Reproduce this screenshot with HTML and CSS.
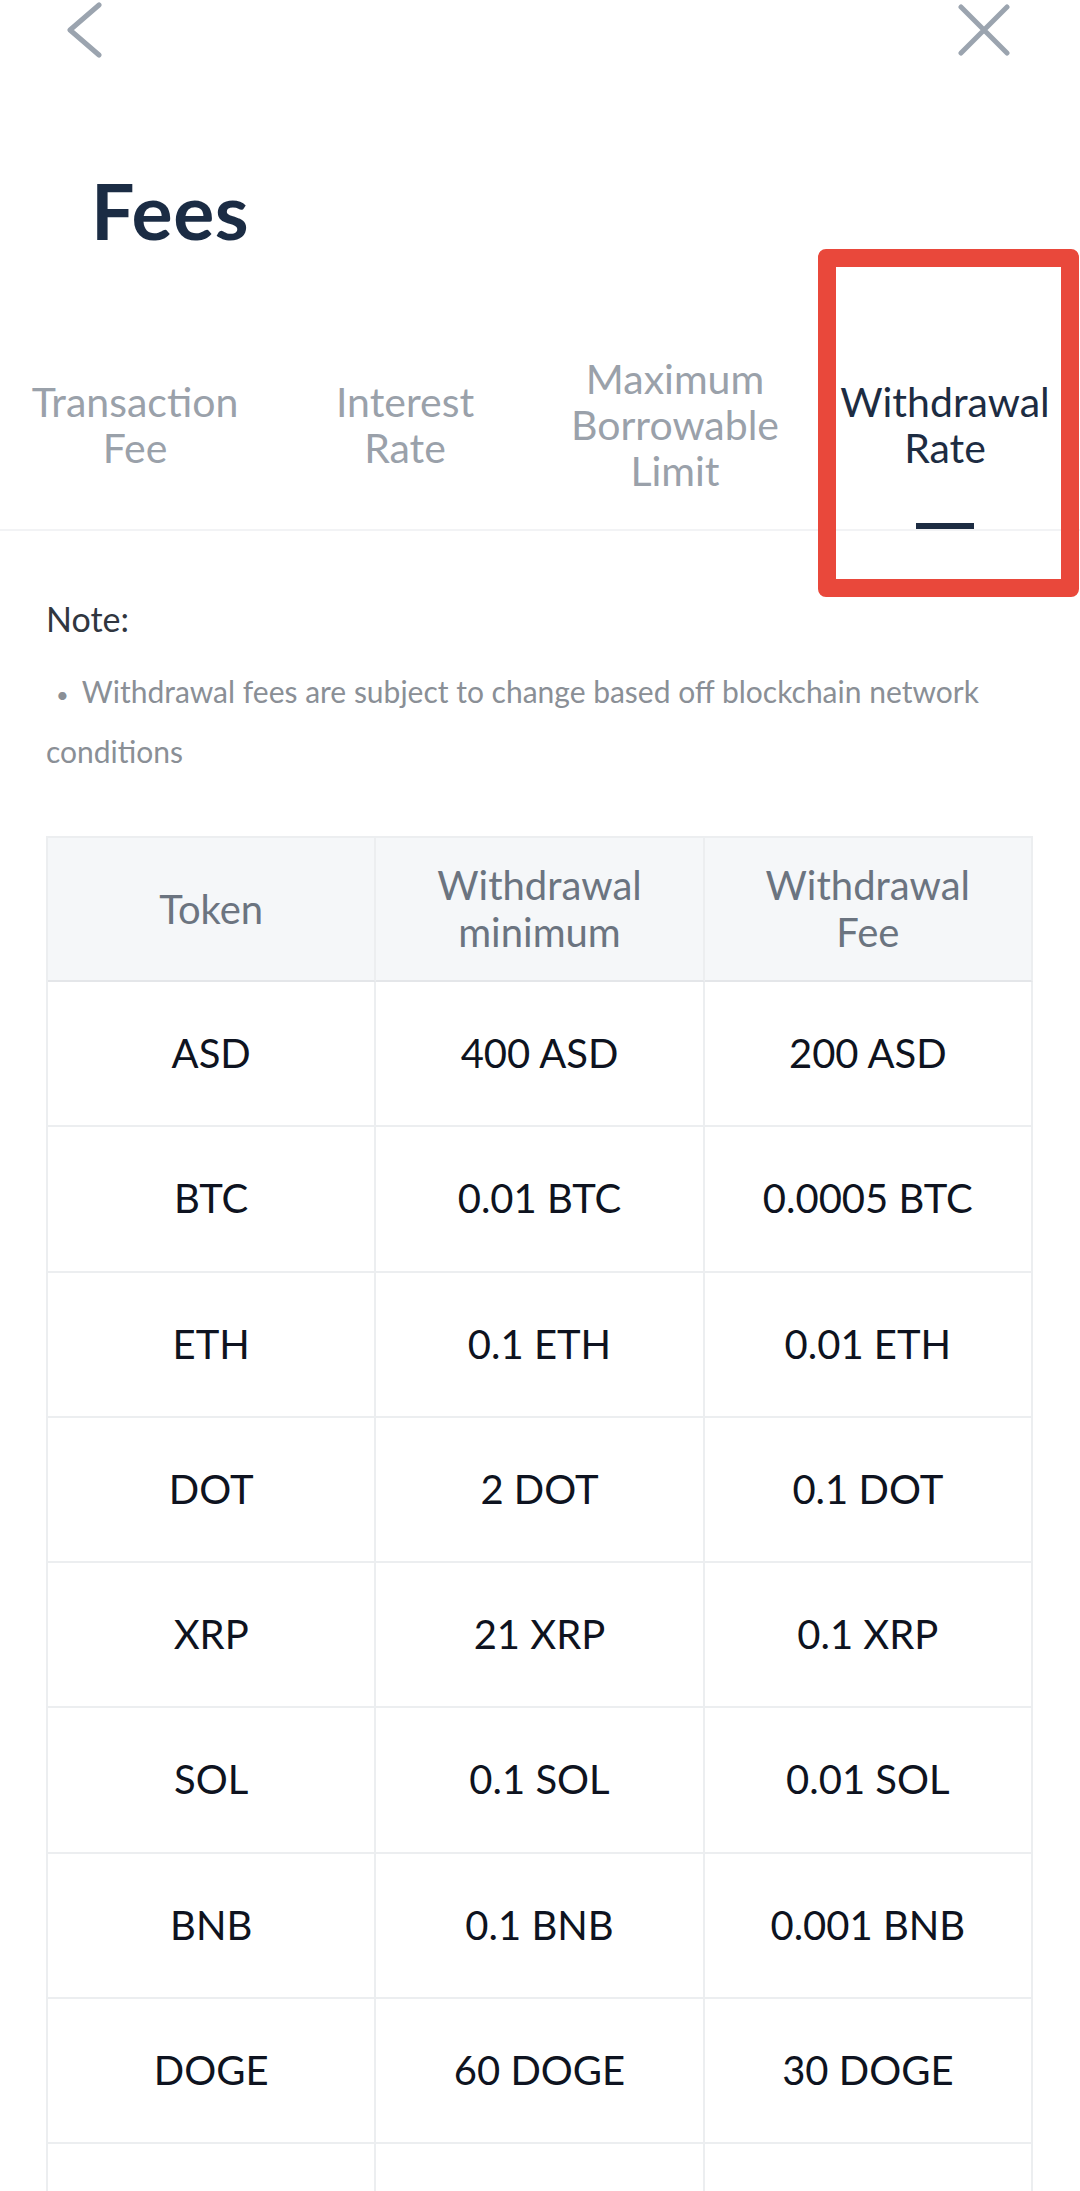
FILE: index.html
```html
<!DOCTYPE html>
<html lang="en">
<head>
<meta charset="utf-8">
<title>Fees</title>
<link rel="stylesheet" href="styles.css">
</head>
<body>
<div class="page">
  <header class="topbar">
    <svg class="icon-back" width="36" height="60" viewBox="0 0 36 60" aria-label="Back">
      <path d="M32 3 L3 28 L32 53" fill="none" stroke="#9ba4af" stroke-width="5" stroke-linecap="round" stroke-linejoin="round"/>
    </svg>
    <svg class="icon-close" width="52" height="52" viewBox="0 0 52 52" aria-label="Close">
      <path d="M3 3 L49 49 M49 3 L3 49" fill="none" stroke="#9ba4af" stroke-width="5" stroke-linecap="round"/>
    </svg>
  </header>

  <h1 class="title">Fees</h1>

  <nav class="tabs">
    <div class="tab"><div class="tab-label">Transaction<br>Fee</div><div class="tab-indicator"></div></div>
    <div class="tab"><div class="tab-label">Interest<br>Rate</div><div class="tab-indicator"></div></div>
    <div class="tab"><div class="tab-label">Maximum<br>Borrowable<br>Limit</div><div class="tab-indicator"></div></div>
    <div class="tab active"><div class="tab-label">Withdrawal<br>Rate</div><div class="tab-indicator"></div></div>
    <div class="highlight"></div>
  </nav>

  <section class="note">
    <p class="note-title">Note:</p>
    <p class="note-text"><span class="bullet">•</span>Withdrawal fees are subject to change based off blockchain network conditions</p>
  </section>

  <div class="fee-table">
    <div class="cell head">Token</div>
    <div class="cell head">Withdrawal<br>minimum</div>
    <div class="cell head">Withdrawal<br>Fee</div>

    <div class="cell">ASD</div><div class="cell">400 ASD</div><div class="cell">200 ASD</div>
    <div class="cell">BTC</div><div class="cell">0.01 BTC</div><div class="cell">0.0005 BTC</div>
    <div class="cell">ETH</div><div class="cell">0.1 ETH</div><div class="cell">0.01 ETH</div>
    <div class="cell">DOT</div><div class="cell">2 DOT</div><div class="cell">0.1 DOT</div>
    <div class="cell">XRP</div><div class="cell">21 XRP</div><div class="cell">0.1 XRP</div>
    <div class="cell">SOL</div><div class="cell">0.1 SOL</div><div class="cell">0.01 SOL</div>
    <div class="cell">BNB</div><div class="cell">0.1 BNB</div><div class="cell">0.001 BNB</div>
    <div class="cell">DOGE</div><div class="cell">60 DOGE</div><div class="cell">30 DOGE</div>
    <div class="cell"></div><div class="cell"></div><div class="cell"></div>
  </div>
</div>
</body>
</html>
```

FILE: styles.css
```css
* { box-sizing: border-box; }

html, body {
  margin: 0;
  padding: 0;
  background: #ffffff;
}

body {
  font-family: "Lato", "Open Sans", "Liberation Sans", sans-serif;
  width: 1080px;
  height: 2191px;
  overflow: hidden;
}

.page {
  position: relative;
}

.topbar {
  height: 62px;
  padding: 2px 70px 0 67px;
  display: flex;
  justify-content: space-between;
  align-items: flex-start;
}

.icon-close {
  margin-top: 2px;
}

.title {
  margin: 103px 0 0 0;
  padding-left: 91px;
  font-size: 77px;
  line-height: 90px;
  font-weight: 700;
  color: #1b2c44;
  letter-spacing: 0.5px;
}

.tabs {
  position: relative;
  margin-top: 72px;
  display: flex;
  border-bottom: 2px solid #f2f3f5;
}

.tab {
  width: 270px;
  display: flex;
  flex-direction: column;
  align-items: center;
}

.tab-label {
  height: 196px;
  display: flex;
  align-items: center;
  justify-content: center;
  text-align: center;
  font-size: 41px;
  line-height: 46px;
  color: #9aa1aa;
}

.tab-indicator {
  width: 58px;
  height: 6px;
}

.tab.active .tab-label {
  color: #1d2c42;
}

.tab.active .tab-indicator {
  background: #1d2c42;
}

.highlight {
  position: absolute;
  left: 818px;
  top: -78px;
  width: 261px;
  height: 348px;
  border: 18px solid #e9483b;
  border-radius: 8px;
  pointer-events: none;
}

.note {
  padding: 0 46px;
}

.note-title {
  margin: 64px 0 0 0;
  font-size: 34px;
  line-height: 48px;
  color: #30363f;
}

.note-text {
  margin: 20px 0 0 0;
  font-size: 30px;
  line-height: 56px;
  color: #8a8f96;
}

.bullet {
  display: inline-block;
  margin: 0 13px 0 10px;
  font-size: 22px;
}

.fee-table {
  margin: 57px 0 0 46px;
  width: 987px;
  display: grid;
  grid-template-columns: repeat(3, 1fr);
  border-top: 2px solid #eceef0;
  border-left: 2px solid #eceef0;
}

.cell {
  height: 145.25px;
  display: flex;
  align-items: center;
  justify-content: center;
  text-align: center;
  border-right: 2px solid #eceef0;
  border-bottom: 2px solid #eceef0;
  font-size: 40px;
  line-height: 47px;
  color: #0e1320;
}

.cell.head {
  height: 144px;
  background: #f5f7f9;
  color: #6b7480;
  border-bottom-color: #e4e6e9;
}
```
